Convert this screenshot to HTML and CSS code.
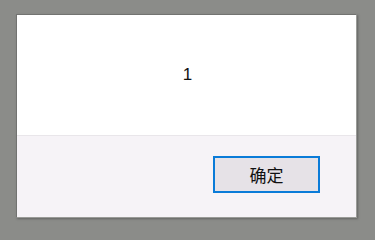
FILE: index.html
```html
<!DOCTYPE html>
<html>
<head>
<meta charset="utf-8">
<link rel="stylesheet" href="styles.css">
</head>
<body>
<div class="dialog">
  <div class="message">1</div>
  <div class="footer">
    <button class="ok">确定</button>
  </div>
</div>
</body>
</html>
```
FILE: styles.css
```css
html, body {
  margin: 0;
  padding: 0;
  background: #8b8c89;
  width: 375px;
  height: 228px;
  overflow: hidden;
}
body {
  padding: 14px 0 0 16px;
  box-sizing: border-box;
  font-family: "Noto Sans CJK SC", "Liberation Sans", sans-serif;
}
.dialog {
  width: 341px;
  box-sizing: border-box;
  border: 1px solid #727371;
  border-right-color: #9a9b98;
  border-bottom-color: #9a9b98;
  background: #fff;
  box-shadow: 1px 1px 2px rgba(60,60,60,0.5);
  display: flex;
  flex-direction: column;
}
.message {
  height: 120px;
  display: flex;
  align-items: center;
  justify-content: center;
  font-family: "Liberation Sans", "Noto Sans CJK SC", sans-serif;
  font-size: 17px;
  color: #111;
  padding-left: 2px;
}
.footer {
  border-top: 1px solid #e9e6ea;
  background: #f6f3f7;
  height: 82px;
  box-sizing: border-box;
  display: flex;
  justify-content: flex-end;
  align-items: flex-start;
  padding: 20px 36px 0 0;
}
.ok {
  width: 107px;
  height: 37px;
  box-sizing: border-box;
  border: 2px solid #0a7bd8;
  background: #e6e2e7;
  font-family: "Noto Sans CJK SC", sans-serif;
  font-size: 17px;
  color: #111;
  padding: 0;
  margin: 0;
  line-height: 1;
}
```
